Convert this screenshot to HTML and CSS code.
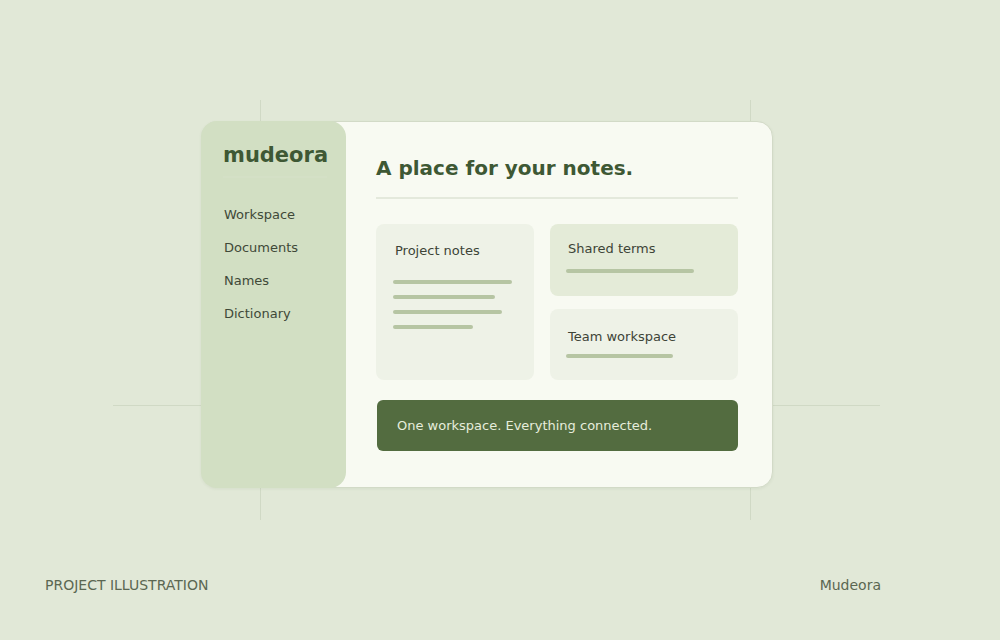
FILE: index.html
```html
<!DOCTYPE html>
<html lang="en">
<head>
    <meta charset="UTF-8">
    <meta name="viewport" content="width=device-width, initial-scale=1.0">
    <title>Mudeora</title>
    <link rel="stylesheet" href="styles.css">
</head>
<body>
    <div class="stage">
        <!-- thin construction lines behind the window -->
        <span class="guide guide-v guide-left"></span>
        <span class="guide guide-v guide-right"></span>
        <span class="guide guide-h"></span>

        <div class="window">
            <aside class="sidebar">
                <div class="logo">mudeora</div>
                <ul class="nav">
                    <li>Workspace</li>
                    <li>Documents</li>
                    <li>Names</li>
                    <li>Dictionary</li>
                </ul>
            </aside>

            <main class="main">
                <h1>A place for your notes.</h1>

                <div class="tiles">
                    <div class="tile tile-tall">
                        <p class="tile-title">Project notes</p>
                        <div class="bars">
                            <span class="bar" style="width: 119px"></span>
                            <span class="bar" style="width: 102px"></span>
                            <span class="bar" style="width: 109px"></span>
                            <span class="bar" style="width: 80px"></span>
                        </div>
                    </div>
                    <div class="tile tile-accent">
                        <p class="tile-title">Shared terms</p>
                        <span class="bar" style="width: 128px"></span>
                    </div>
                    <div class="tile tile-low">
                        <p class="tile-title">Team workspace</p>
                        <span class="bar" style="width: 107px"></span>
                    </div>
                </div>

                <div class="banner">One workspace. Everything connected.</div>
            </main>
        </div>
    </div>

    <footer class="footer">
        <span>PROJECT ILLUSTRATION</span>
        <span class="brand">Mudeora</span>
    </footer>
</body>
</html>
```

FILE: styles.css
```css
* {
    box-sizing: border-box;
}

body {
    font-family: "DejaVu Sans", Verdana, sans-serif;
    background-color: #e1e8d7;
    margin: 0;
    padding: 0;
    height: 640px;
    overflow: hidden;
}

.stage {
    position: relative;
    height: 560px;
    padding-top: 121px;
    padding-left: 201px;
}

.guide {
    position: absolute;
    background: #d0d9c5;
}

.guide-v {
    top: 100px;
    width: 1px;
    height: 420px;
}

.guide-left {
    left: 260px;
}

.guide-right {
    left: 750px;
}

.guide-h {
    top: 405px;
    left: 113px;
    width: 767px;
    height: 1px;
}

.window {
    position: relative;
    display: flex;
    width: 572px;
    height: 367px;
    background: #f8faf2;
    border: 1px solid #d2dac7;
    border-radius: 16px;
    box-shadow: 0 1px 3px rgba(80, 100, 60, 0.08);
}

.sidebar {
    width: 145px;
    margin: -1px 0 -1px -1px;
    background: #d2dfc3;
    border-radius: 16px;
    padding: 21px 0 0 22px;
}

.logo {
    font-size: 21px;
    font-weight: bold;
    line-height: 26px;
    color: #3e5834;
    padding-bottom: 8px;
    border-bottom: 2px solid rgba(255, 255, 255, 0.06);
    width: 104px;
}

.nav {
    list-style: none;
    margin: 27px 0 0 1px;
    padding: 0;
    display: flex;
    flex-direction: column;
    gap: 13px;
}

.nav li {
    font-size: 13px;
    line-height: 20px;
    color: #3f4938;
}

.main {
    flex: 1;
    padding: 34px 34px 0 30px;
}

h1 {
    margin: 0;
    font-size: 20px;
    line-height: 24px;
    color: #3e5834;
    padding-bottom: 17px;
    border-bottom: 2px solid #e4e9dc;
}

.tiles {
    display: grid;
    grid-template-columns: 158px 1fr;
    grid-template-rows: 72px 71px;
    gap: 13px 16px;
    margin-top: 25px;
}

.tile {
    background: #eef2e7;
    border-radius: 8px;
    padding: 17px 16px 0 16px;
}

.tile-tall {
    grid-row: span 2;
    padding: 18px 17px 0 17px;
}

.tile-accent {
    background: #e4ebd8;
    padding-top: 16px;
}

.tile-low {
    padding-top: 19px;
}

.tile-title {
    margin: 0 0 11px 2px;
    font-size: 13px;
    line-height: 18px;
    color: #3d4437;
}

.tile-low .tile-title {
    margin-bottom: 8px;
}

.tile-tall .tile-title {
    margin-bottom: 20px;
}

.bars {
    display: flex;
    flex-direction: column;
    gap: 11px;
}

.bar {
    display: block;
    height: 4px;
    border-radius: 2px;
    background: #b6c5a3;
}

.banner {
    margin: 20px 0 0 1px;
    height: 51px;
    background: #536c40;
    border-radius: 6px;
    padding: 1px 0 0 20px;
    font-size: 13px;
    line-height: 50px;
    color: #e6eddc;
}

.footer {
    display: flex;
    justify-content: space-between;
    margin-top: 15px;
    padding: 0 119px 0 45px;
    font-size: 14px;
    line-height: 20px;
    color: #5b6752;
}
```
